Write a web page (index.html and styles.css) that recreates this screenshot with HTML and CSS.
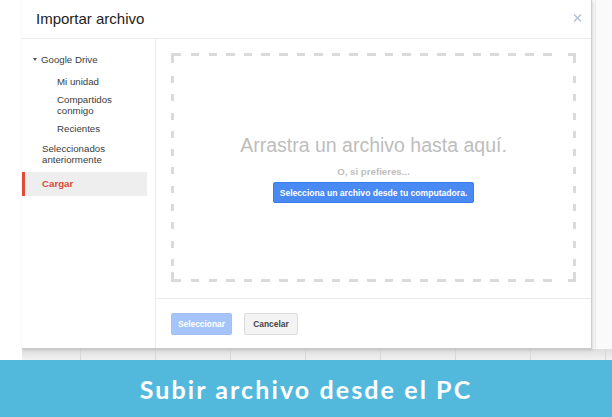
FILE: index.html
```html
<!DOCTYPE html>
<html lang="es">
<head>
<meta charset="utf-8">
<title>Importar archivo</title>
<link rel="stylesheet" href="styles.css">
</head>
<body>
<div class="page">
  <div class="stage">
    <div class="row">
      <div class="dialog">
        <div class="header">
          <h1 class="title">Importar archivo</h1>
          <button class="close" aria-label="Cerrar">
            <svg width="9" height="8" viewBox="0 0 9 8"><path d="M1 0.5 L8 7.5 M8 0.5 L1 7.5" stroke="#b3bfd6" stroke-width="1.4" fill="none"/></svg>
          </button>
        </div>
        <div class="body">
          <nav class="sidebar">
            <div class="item root"><span class="caret"></span>Google Drive</div>
            <div class="item sub first">Mi unidad</div>
            <div class="item sub">Compartidos<br>conmigo</div>
            <div class="item sub recent">Recientes</div>
            <div class="item top">Seleccionados<br>anteriormente</div>
            <div class="item top active">Cargar</div>
          </nav>
          <main class="main">
            <div class="zone-wrap">
              <div class="dropzone">
                <div class="drop-title">Arrastra un archivo hasta aquí.</div>
                <div class="drop-or">O, si prefieres...</div>
                <button class="btn-pick">Selecciona un archivo desde tu computadora.</button>
              </div>
            </div>
            <div class="footer">
              <button class="btn btn-select">Seleccionar</button>
              <button class="btn btn-cancel">Cancelar</button>
            </div>
          </main>
        </div>
      </div>
      <div class="aside"></div>
    </div>
    <div class="band"></div>
  </div>
  <div class="banner">Subir archivo desde el PC</div>
</div>
</body>
</html>
```

FILE: styles.css
```css
* { box-sizing: border-box; }
html, body { margin: 0; padding: 0; }
body {
  width: 612px;
  height: 417px;
  overflow: hidden;
  background: #fff;
  font-family: "Liberation Sans", Arial, sans-serif;
  color: #444;
}
.page { display: flex; flex-direction: column; height: 417px; }
.stage { padding-left: 22px; height: 360px; display: flex; flex-direction: column; }
.row { display: flex; height: 349px; }
.dialog {
  width: 570px;
  height: 349px;
  background: #fff;
  border-right: 1px solid #cfcfcf;
  border-bottom: 1px solid #c9c9c9;
  box-shadow: 1px 1px 3px rgba(0,0,0,0.15);
  display: flex;
  flex-direction: column;
  position: relative;
  z-index: 1;
}
.aside {
  flex: 1;
  background:
    linear-gradient(90deg, transparent 0 3px, #ececec 3px 4px, transparent 4px) 0 0 / 100% 100% no-repeat,
    #fafafa;
}
.band {
  height: 11px;
  background:
    repeating-linear-gradient(90deg, transparent 0 58px, #d9d9d9 58px 59px, transparent 59px 75px),
    linear-gradient(#dedede, #f1f1f1);
}
.header {
  height: 39px;
  border-bottom: 1px solid #ebebeb;
  display: flex;
  align-items: center;
  justify-content: space-between;
  padding: 0 9px 0 14px;
}
.title {
  margin: 0;
  font-size: 15px;
  font-weight: normal;
  color: #222;
  line-height: 38px;
}
.close {
  border: 0;
  background: none;
  padding: 0;
  width: 9px;
  height: 8px;
  display: flex;
  margin-top: -3px;
}
.body { flex: 1; display: flex; }
.sidebar {
  width: 134px;
  border-right: 1px solid #ececec;
  padding: 12px 8px 0 0;
  font-size: 9.7px;
  line-height: 11px;
  color: #3c3c3c;
}
.item { padding: 3px 0; }
.root { padding-left: 11px; display: flex; align-items: center; margin-bottom: 5px; }
.caret {
  width: 0; height: 0;
  border-left: 2.5px solid transparent;
  border-right: 2.5px solid transparent;
  border-top: 3px solid #555;
  margin-right: 4px;
}
.sub { padding-left: 35px; margin-bottom: 1px; }
.recent { margin-bottom: 3px; }
.top { padding-left: 20px; margin-bottom: 4px; }
.active {
  background: #eeeeee;
  border-left: 3px solid #dd4b39;
  padding: 6px 0 7px 17px;
  color: #dd4b39;
  font-weight: bold;
}
.main { flex: 1; display: flex; flex-direction: column; }
.zone-wrap { padding: 14px 15px 16px; border-bottom: 1px solid #ebebeb; }
.dropzone {
  height: 229px;
  display: flex;
  flex-direction: column;
  align-items: center;
  justify-content: center;
  padding-top: 1px;
  --c: #dadada;
  background:
    linear-gradient(var(--c), var(--c)) left top / 10px 3px no-repeat,
    linear-gradient(var(--c), var(--c)) left top / 3px 10px no-repeat,
    linear-gradient(var(--c), var(--c)) right top / 8px 3px no-repeat,
    linear-gradient(var(--c), var(--c)) right top / 3px 10px no-repeat,
    linear-gradient(var(--c), var(--c)) left bottom / 10px 3px no-repeat,
    linear-gradient(var(--c), var(--c)) left bottom / 3px 10px no-repeat,
    linear-gradient(var(--c), var(--c)) right bottom / 8px 3px no-repeat,
    linear-gradient(var(--c), var(--c)) right bottom / 3px 10px no-repeat,
    repeating-linear-gradient(90deg, var(--c) 0 8.5px, transparent 8.5px 17.6px) 20px 0 / 370px 3px no-repeat,
    repeating-linear-gradient(90deg, var(--c) 0 8.5px, transparent 8.5px 17.6px) 20px 100% / 370px 3px no-repeat,
    repeating-linear-gradient(180deg, var(--c) 0 7px, transparent 7px 18.3px) 0 23px / 3px 190px no-repeat,
    repeating-linear-gradient(180deg, var(--c) 0 7px, transparent 7px 18.3px) 100% 23px / 3px 190px no-repeat;
}
.drop-title {
  font-size: 19.5px;
  line-height: 24px;
  color: #bdbdbd;
}
.drop-or {
  margin-top: 9px;
  font-size: 9.7px;
  line-height: 12px;
  font-weight: bold;
  color: #bdbdbd;
}
.btn-pick {
  margin-top: 4px;
  height: 21px;
  padding: 0 6px;
  border: 1px solid #3b7bea;
  border-radius: 2px;
  background: #4a8af4;
  color: #fff;
  font-family: "Liberation Sans", Arial, sans-serif;
  font-size: 8.6px;
  font-weight: bold;
}
.footer {
  flex: 1;
  display: flex;
  align-items: flex-start;
  gap: 12px;
  padding: 14px 15px 0;
}
.btn {
  height: 22px;
  border-radius: 2px;
  font-family: "Liberation Sans", Arial, sans-serif;
  font-size: 8.4px;
  font-weight: bold;
}
.btn-select {
  width: 61px;
  padding: 0;
  border: 1px solid #a0c0f7;
  background: #a4c4fa;
  color: #fff;
}
.btn-cancel {
  width: 54px;
  padding: 0;
  border: 1px solid #dcdcdc;
  background: #f3f3f3;
  color: #444;
}
.banner {
  height: 57px;
  background: #52b9dd;
  color: #fff;
  display: flex;
  align-items: center;
  justify-content: center;
  font-family: "Lato", "Open Sans", sans-serif;
  font-weight: bold;
  font-size: 25px;
  letter-spacing: 2.1px;
  padding-top: 1px;
}
```
